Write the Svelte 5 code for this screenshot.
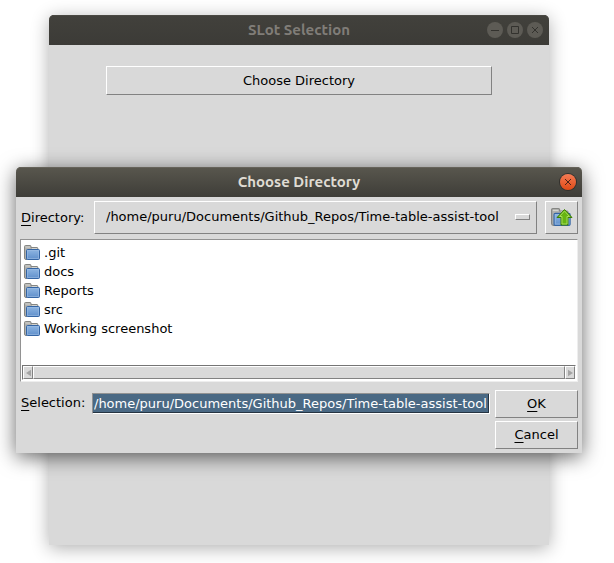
<script>
  const path = '/home/puru/Documents/Github_Repos/Time-table-assist-tool';
  const folders = ['.git', 'docs', 'Reports', 'src', 'Working screenshot'];
  let selection = $state(path);
</script>

{#snippet folderShape()}
  <path d="M.5 13V1.500q0-1 1-1h4.500q1 0 1 1v1H13q.8 0 .8 1v3H3v8H2q-1.500 0-1.500-1.500z" fill="#b1b1ae" stroke="#858683" />
  <path d="M1.500 2h4.500M8 3.500h5" stroke="#d3d3cf" />
  <rect x="2.500" y="4.500" width="13" height="10" rx="1" fill="url(#folder-blue)" stroke="#3465a4" />
  <path d="M3.500 13.500v-8h11v8z" fill="none" stroke="#9cbde3" stroke-opacity=".6" />
{/snippet}

<svg class="defs" aria-hidden="true">
  <defs>
    <linearGradient id="folder-blue" x1="0" y1="0" x2="0" y2="1">
      <stop offset="0" stop-color="#8fb6e2" />
      <stop offset="1" stop-color="#5f8fcb" />
    </linearGradient>
  </defs>
</svg>

<div class="desktop">
  <main class="window">
    <header class="titlebar">
      <h1>SLot Selection</h1>
      <div class="controls">
        <button aria-label="Minimize"><svg viewBox="0 0 16 16"><path d="M4 8.500h8" /></svg></button>
        <button aria-label="Maximize"><svg viewBox="0 0 16 16"><path d="M4.500 4.500h7v7h-7z" /></svg></button>
        <button aria-label="Close"><svg viewBox="0 0 16 16"><path d="M5 5l6 6M11 5l-6 6" /></svg></button>
      </div>
    </header>
    <div class="content">
      <button class="push choose">Choose Directory</button>
    </div>
  </main>

  <div class="window dialog" role="dialog" aria-labelledby="dialog-title">
    <header class="titlebar">
      <h2 id="dialog-title">Choose Directory</h2>
      <div class="controls">
        <button aria-label="Close dialog"><svg viewBox="0 0 16 16"><path d="M5 5l6 6M11 5l-6 6" /></svg></button>
      </div>
    </header>
    <form class="form" onsubmit={(e) => e.preventDefault()}>
      <div class="row">
        <label for="directory"><u>D</u>irectory:</label>
        <div class="picker">
          <select id="directory"><option>{path}</option></select>
          <span class="indicator"></span>
        </div>
        <button class="push up" type="button" aria-label="Parent directory">
          <svg viewBox="0 0 22 20">
            <g transform="scale(1.230 1.200)">{@render folderShape()}</g>
            <path d="M13.500 1.500L21 9.500h-4v7.500h-7V9.500H6z" fill="#67b412" stroke="#3c7d05" stroke-linejoin="round" />
            <path d="M13.500 3L18.500 8.500H16V16h-5V8.500H8.500z" fill="none" stroke="#a6dc5a" />
          </svg>
        </button>
      </div>

      <div class="listbox">
        <ul>
          {#each folders as folder}
            <li>
              <svg viewBox="0 0 16 15">{@render folderShape()}</svg>
              <span>{folder}</span>
            </li>
          {/each}
        </ul>
        <div class="scrollbar">
          <button type="button" aria-label="Scroll left"><svg viewBox="0 0 6 8"><path d="M6 0v8L0 4z" /></svg></button>
          <div class="thumb"></div>
          <button type="button" aria-label="Scroll right"><svg viewBox="0 0 6 8"><path d="M0 0v8l6-4z" /></svg></button>
        </div>
      </div>

      <div class="row bottom">
        <label for="selection"><u>S</u>election:</label>
        <input id="selection" bind:value={selection} />
        <div class="actions">
          <button class="push"><span><u>O</u>K</span></button>
          <button class="push" type="button"><span><u>C</u>ancel</span></button>
        </div>
      </div>
    </form>
  </div>
</div>

<style>
  .desktop {
    position: relative;
    box-sizing: border-box;
    min-height: 100vh;
    padding: 15px 65px 18px 49px;
    display: flex;
    background: #fff;
    overflow: hidden;
    color: #000;
    font: 13px/18px "DejaVu Sans", sans-serif;
  }
  .desktop * { box-sizing: border-box; }
  .defs { position: absolute; width: 0; height: 0; }
  button, input, select { font: inherit; color: inherit; margin: 0; }

  .window {
    flex: 1;
    min-width: 0;
    background: #d9d9d9;
    border-radius: 5px 5px 0 0;
    box-shadow: 0 3px 18px rgba(0, 0, 0, .32);
  }
  .dialog {
    position: absolute;
    top: 167px;
    left: 16px;
    right: 32px;
    box-shadow: 0 4px 20px rgba(0, 0, 0, .6);
  }

  .titlebar {
    display: grid;
    grid-template-columns: 1fr auto 1fr;
    align-items: center;
    height: 30px;
    padding: 0 6px;
    border-radius: 5px 5px 0 0;
    box-shadow: inset 0 1px #4a4943;
    background: linear-gradient(#42413c, #3c3b37);
    color: #807d78;
  }
  h1, h2 {
    grid-column: 2;
    margin: 0;
    font: bold 15px/20px Ubuntu, "Noto Sans", sans-serif;
  }
  .dialog .titlebar {
    box-shadow: inset 0 1px #66635a;
    background: linear-gradient(#59574e, #3e3d38);
    color: #dfdbd2;
  }
  .controls { display: flex; justify-content: flex-end; gap: 4px; }
  .controls button {
    width: 16px;
    height: 16px;
    padding: 0;
    border: 0;
    border-radius: 50%;
    background: #5d5b55;
    color: #33322e;
  }
  .controls svg { display: block; width: 16px; height: 16px; fill: none; stroke: currentColor; }
  .dialog .controls button {
    background: linear-gradient(#f47b55, #df4a16);
    box-shadow: 0 0 0 1px #33302c;
    color: #4a2418;
  }

  .content { padding: 21px 57px; }
  .push {
    padding: 0;
    background: #d9d9d9;
    border: 1px solid;
    border-color: #fff #828282 #828282 #fff;
    border-radius: 0;
  }
  .choose { display: block; width: 100%; height: 29px; }

  .form { padding: 4px; }
  .row { display: flex; align-items: center; }
  label { flex: none; width: 74px; padding-left: 1px; }
  u { text-decoration: underline; text-decoration-thickness: 1px; text-underline-offset: 3px; }
  .picker { position: relative; flex: 1; min-width: 0; margin-right: 8px; }
  select {
    display: block;
    appearance: none;
    width: 100%;
    height: 33px;
    padding: 0 24px 1px 11px;
    background: #d9d9d9;
    border: 1px solid;
    border-color: #fff #828282 #828282 #fff;
    border-radius: 0;
  }
  .indicator {
    position: absolute;
    top: 13px;
    right: 7px;
    width: 15px;
    height: 6px;
    border: 1px solid;
    border-color: #fff #828282 #828282 #fff;
    pointer-events: none;
  }
  .up { display: grid; place-items: center; width: 33px; height: 33px; }
  .up svg { width: 22px; height: 20px; }

  .listbox {
    margin-top: 5px;
    padding: 1px;
    background: #fff;
    border: 1px solid;
    border-color: #929292 #eee #eee #929292;
  }
  ul { list-style: none; height: 124px; margin: 0; padding: 2px; }
  li { display: flex; align-items: center; gap: 4px; height: 19px; }
  li svg { width: 16px; height: 15px; }
  .scrollbar {
    display: flex;
    height: 15px;
    background: #c3c3c3;
    border: 1px solid;
    border-color: #757575 #fff #fff #757575;
  }
  .scrollbar button, .thumb {
    background: #d9d9d9;
    border: 1px solid;
    border-color: #fff #828282 #828282 #fff;
  }
  .scrollbar button { display: grid; place-items: center; width: 10px; padding: 0; border-radius: 0; }
  .scrollbar svg { width: 5px; height: 8px; fill: #a3a3a3; }
  .thumb { flex: 1; }

  .bottom { align-items: flex-start; margin-top: 8px; }
  .bottom label { width: 72px; padding-top: 4px; }
  input {
    flex: 1;
    min-width: 0;
    height: 21px;
    margin: 3px 5px 0 0;
    padding: 0 1px;
    background: #4a6984;
    color: #fff;
    border: 1px solid;
    border-color: #929292 #fff #fff #929292;
    border-radius: 0;
    box-shadow: inset 0 -1px #253442, inset -1px 0 #253442;
    outline: 0;
  }
  .actions { display: grid; gap: 3px; width: 83px; }
  .actions .push { height: 28px; }
</style>
